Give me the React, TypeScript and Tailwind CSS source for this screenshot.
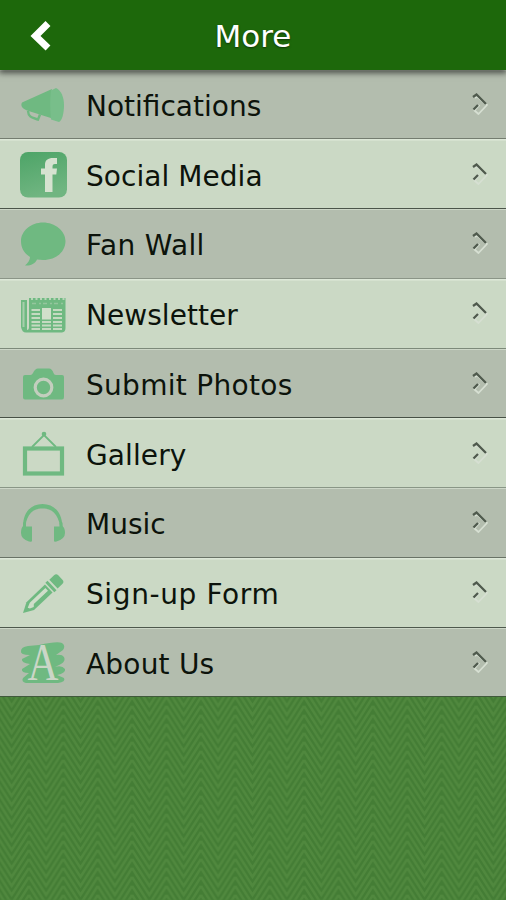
import React from "react";

const G = "#6fb981";

function Megaphone() {
  return (
    <svg width="48" height="48" viewBox="0 0 48 48" fill={G}>
      <path d="M3 20.500 L33 7 C31 16 32 27 35 37 L8 28.500 C4 27 1 24 3 20.500Z" />
      <path d="M37 6 C42 8 45 15 45 23 C45 31 43 39 40 40 L32 37.500 C31 27 31 16 32 8.500Z" fill="#78be8a" />
      <path d="M9 29 C9.500 35.500 13 35.500 19 37.500 L21 32.500" fill="none" stroke={G} strokeWidth="2.400" />
    </svg>
  );
}

function Facebook() {
  return (
    <svg width="48" height="48" viewBox="0 0 48 48">
      <defs>
        <linearGradient id="fb" x1="0" y1="0" x2="0.3" y2="1">
          <stop offset="0" stopColor="#4da467" />
          <stop offset="1" stopColor="#70b581" />
        </linearGradient>
      </defs>
      <rect x="1" y="0" width="47" height="45.500" rx="8" fill="url(#fb)" />
      <path d="M26 40 V22.500 H22 V16.500 H26 V13 C26 8 29 6 34 6 H38 V12 H36 C34 12 33.500 13 33.500 15 V16.500 H38 L37.300 22.500 H33.500 V40Z" fill="#d6e2d0" />
    </svg>
  );
}

function Bubble() {
  return (
    <svg width="48" height="48" viewBox="0 0 48 48" fill={G}>
      <path d="M24 1.500 C36 1.500 46.500 10 46.500 20 C46.500 31 37 39 24 39 L18 38.500 C16 43 11 45 6 44.500 C9 42 11 39 11 36 C5 32 2 27 2 20 C2 10 12 1.500 24 1.500Z" />
    </svg>
  );
}

function Newspaper() {
  return (
    <svg width="48" height="48" viewBox="0 0 48 48">
      <path d="M2 9 V36 Q3 41.500 7 41.500 H43 Q46.500 41 46.500 37 V7 H10 V36 Q10 39 8 39 V9Z" fill={G} />
      <path d="M4.500 11 V36" stroke="#a9ceac" strokeWidth="2" />
      <path d="M12 8 H46" stroke="#b9d6b9" strokeWidth="2" strokeDasharray="2 2.500" />
      <path d="M13 12.500 H45" stroke="#94c69d" strokeWidth="1.300" strokeDasharray="4 3 2 2" />
      <rect x="23" y="17" width="9" height="11.500" fill="#d1dfca" />
      <g stroke="#c5dac1" strokeWidth="2">
        <path d="M12.500 19 H21 M12.500 23 H21 M12.500 27 H21 M12.500 31 H21 M12.500 34.500 H21 M12.500 38 H21 M34 19 H43 M34 23 H43 M34 27 H43 M34 31 H43 M34 34.500 H43 M34 38 H43 M23 31 H32 M23 34.500 H32 M23 38 H32" />
      </g>
    </svg>
  );
}

function Camera() {
  return (
    <svg width="48" height="48" viewBox="0 0 48 48">
      <path d="M6 14 H11.500 Q13 14 14 12 Q16 7.500 19 7.500 H30 Q33 7.500 34.500 12 Q35 14 37 14 H43 Q45 14 45 16 V36 Q45 38.500 43 38.500 H6 Q4 38.500 4 36.500 V16 Q4 14 6 14Z" fill={G} />
      <circle cx="24.500" cy="26.500" r="8.300" fill="none" stroke="#c3cebe" strokeWidth="3.200" />
    </svg>
  );
}

function Frame() {
  return (
    <svg width="48" height="48" viewBox="0 0 48 48" fill="none" stroke={G}>
      <path d="M13 16 L25 4 L37 16" strokeWidth="1.800" />
      <circle cx="25" cy="3" r="2.300" fill={G} stroke="none" />
      <rect x="6" y="17.500" width="37" height="25" strokeWidth="4.200" />
    </svg>
  );
}

function Headphones() {
  return (
    <svg width="48" height="48" viewBox="0 0 48 48" fill={G}>
      <path d="M4 27 C4 12 12 4 23.500 4 C35 4 43 12 43.500 27 L41 26 C39 14 33 8.500 23.500 8.500 C14 8.500 8 14 6.500 26Z" />
      <path d="M4 22.500 L7 23 V26.500 H13 V41 Q13 42 10 41.500 Q2 39 2 33 Q2 28 4 26Z M43.500 22.500 L40.500 23 V26.500 H35 V41 Q35 42 37.500 41.500 Q46 39 46 33 Q46 28 43.500 26Z" />
    </svg>
  );
}

function Pencil() {
  return (
    <svg width="48" height="48" viewBox="0 0 48 48">
      <g transform="translate(4 43) rotate(-43.500)">
        <path d="M0 0 L10 -5.500 H35.500 V5.500 H10Z" fill={G} />
        <path d="M7 -0.500 L12 -2.800 H33.500 V1 H14 L12 3 L8 1.500Z" fill="#cfddc9" />
        <rect x="37" y="-6.500" width="3" height="13" fill={G} />
        <path d="M42 -6 H48.500 Q51.500 -6 51.500 -3 V3 Q51.500 6 48.500 6 H42Z" fill={G} />
      </g>
    </svg>
  );
}

function AboutIcon() {
  return (
    <svg className="overflow-visible" width="48" height="48" viewBox="0 0 48 48">
      <path d="M2 11 Q2 7 9 6 L20 5 Q38 1 43 3 Q47 6 44 10 L37 15 Q43 14 45 17 Q47 21 42 24 L36 27 Q43 25 46 29 Q47 33 38 35 L45 38 Q47 42 39 43 L7 43 Q2 42 4 38 L10 33 Q2 33 3 29 L11 24 Q2 23 3 19 L11 15 Q1 15 2 11Z" fill={G} />
      <text x="24" y="39.500" textAnchor="middle" fontSize="52" textLength="31" lengthAdjust="spacingAndGlyphs" className="font-['Liberation_Serif',serif]" fill="#cbd6c7">A</text>
    </svg>
  );
}

function Chevron() {
  return (
    <svg width="20" height="26" viewBox="0 0 20 26" fill="none">
      <path d="M5 7 L7 5.500 L17 14 L8.500 23 L4.500 19.500 L9.500 14" stroke="#d6dfd2" strokeWidth="1.800" strokeLinejoin="round" />
      <path d="M3 6 L6.500 3.500 L16 13" stroke="#4f5a4d" strokeWidth="2.300" />
      <path d="M3.500 18.500 L8 14" stroke="#4f5a4d" strokeWidth="2.300" />
    </svg>
  );
}

const rows = [
  { label: "Notifications", Icon: Megaphone, line: "border-[#747d70]", tracking: "tracking-normal" },
  { label: "Social Media", Icon: Facebook, line: "border-[#4b554a]", tracking: "tracking-[0.05px]" },
  { label: "Fan Wall", Icon: Bubble, line: "border-[#8b9587]", tracking: "tracking-[0.35px]" },
  { label: "Newsletter", Icon: Newspaper, line: "border-[#7d8a7a]", tracking: "tracking-[0.05px]" },
  { label: "Submit Photos", Icon: Camera, line: "border-[#475146]", tracking: "tracking-[0.3px]" },
  { label: "Gallery", Icon: Frame, line: "border-[#899686]", tracking: "tracking-[0.1px]" },
  { label: "Music", Icon: Headphones, line: "border-[#697366]", tracking: "tracking-normal" },
  { label: "Sign-up Form", Icon: Pencil, line: "border-[#4e594d]", tracking: "tracking-[0.6px]" },
  { label: "About Us", Icon: AboutIcon, line: "border-[#40593b]", tracking: "tracking-[0.2px]" },
];

export default function App() {
  return (
    <div className="flex h-[900px] w-full flex-col overflow-hidden bg-[#498239] font-['DejaVu_Sans',Verdana,sans-serif]">
      <header className="relative z-10 grid h-[69.500px] shrink-0 grid-cols-[82px_1fr_82px] items-center bg-[#1d680b] shadow-[0_2px_6px_1px_rgba(0,0,0,0.6)]">
        <button className="flex justify-center pt-0.5" aria-label="Back">
          <svg width="24" height="32" viewBox="0 0 24 32" fill="none">
            <path d="M19 3.500 L6.500 16 L19 28" stroke="white" strokeWidth="7" />
          </svg>
        </button>
        <h1 className="pt-1 text-center text-[31px] leading-none text-white [text-shadow:0_1px_2px_rgba(0,0,0,0.5)]">More</h1>
      </header>
      <ul className="shrink-0">
        {rows.map(({ label, Icon, line, tracking }, i) => (
          <li
            key={label}
            className={`flex h-[69.750px] items-center border-b ${line} pl-[19px] pr-4 ${
              i % 2
                ? "bg-[#cbd9c5] shadow-[inset_0_1px_0_#dde8d8,inset_0_2px_0_#d5e1cf]"
                : "bg-[#b3bdae] shadow-[inset_0_1px_0_#cdd7c8]"
            }`}
          >
            <span className="pt-1">
              <Icon />
            </span>
            <span className={`flex-1 pl-[19px] pt-1.5 text-[28px] leading-none text-[#0c130b] ${tracking}`}>{label}</span>
            <Chevron />
          </li>
        ))}
      </ul>
      <svg className="w-full flex-1" aria-hidden="true">
        <defs>
          <pattern id="weave" width="34.400" height="9" patternUnits="userSpaceOnUse" x="-5.500">
            <rect width="34.400" height="9" fill="#447d35" />
            <path d="M0 -36 L17.200 -9 L34.400 -36 M0 -27 L17.200 0 L34.400 -27 M0 -18 L17.200 9 L34.400 -18 M0 -9 L17.200 18 L34.400 -9 M0 0 L17.200 27 L34.400 0 M0 9 L17.200 36 L34.400 9" fill="none" stroke="#50883e" strokeWidth="2.500" />
          </pattern>
        </defs>
        <rect width="100%" height="100%" fill="url(#weave)" />
      </svg>
    </div>
  );
}
